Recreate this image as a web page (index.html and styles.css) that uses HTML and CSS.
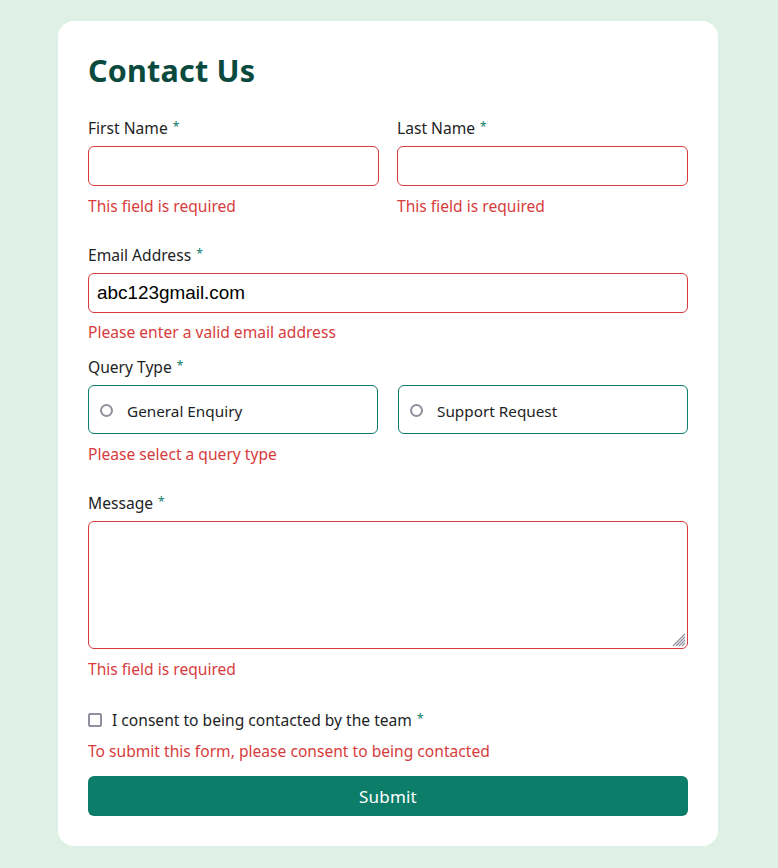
FILE: index.html
```html
<!DOCTYPE html>
<html lang="en">
<head>
<meta charset="utf-8">
<title>Contact Us</title>
<link rel="stylesheet" href="styles.css">
</head>
<body>
<main class="card">
  <h1 class="title">Contact Us</h1>
  <form class="form" novalidate>
    <div class="row names">
      <div class="field">
        <label class="label" for="fn">First Name <span class="req">*</span></label>
        <input class="input invalid" id="fn" type="text">
        <p class="error">This field is required</p>
      </div>
      <div class="field">
        <label class="label" for="ln">Last Name <span class="req">*</span></label>
        <input class="input invalid" id="ln" type="text">
        <p class="error">This field is required</p>
      </div>
    </div>

    <div class="field email">
      <label class="label" for="em">Email Address <span class="req">*</span></label>
      <input class="input invalid email-input" id="em" type="email" value="abc123gmail.com">
      <p class="error">Please enter a valid email address</p>
    </div>

    <div class="field query">
      <span class="label">Query Type <span class="req">*</span></span>
      <div class="radios">
        <label class="radio-box"><input class="radio" type="radio" name="q"><span>General Enquiry</span></label>
        <label class="radio-box"><input class="radio" type="radio" name="q"><span>Support Request</span></label>
      </div>
      <p class="error">Please select a query type</p>
    </div>

    <div class="field message">
      <label class="label" for="msg">Message <span class="req">*</span></label>
      <div class="textarea-wrap">
        <textarea class="input invalid textarea" id="msg"></textarea>
        <svg class="grip" width="14" height="14" viewBox="0 0 14 14" aria-hidden="true">
          <path d="M13 1 L1 13 M13 4 L4 13 M13 7 L7 13 M13 10 L10 13" stroke="#8f8f9d" stroke-width="1.2" fill="none"/>
        </svg>
      </div>
      <p class="error">This field is required</p>
    </div>

    <div class="field consent">
      <label class="check-row"><input class="check" type="checkbox"><span>I consent to being contacted by the team <span class="req">*</span></span></label>
      <p class="error">To submit this form, please consent to being contacted</p>
    </div>

    <button class="submit" type="button">Submit</button>
  </form>
</main>
</body>
</html>
```

FILE: styles.css
```css
* { box-sizing: border-box; }

html, body {
  margin: 0;
  padding: 0;
}

body {
  background: #dff1e7;
  font-family: "Noto Sans", "Lato", sans-serif;
  color: #1d2426;
  min-height: 868px;
  padding-top: 21px;
}

.card {
  width: 660px;
  margin: 0 0 0 58px;
  background: #ffffff;
  border-radius: 16px;
  padding: 30px 30px 30px;
}

.title {
  margin: 0;
  font-size: 30.5px;
  line-height: 38px;
  font-weight: 700;
  color: #0a4a3e;
  letter-spacing: 0.2px;
}

.form {
  display: flex;
  flex-direction: column;
  margin-top: 29px;
}

.row.names {
  display: grid;
  grid-template-columns: 291px 291px;
  column-gap: 18px;
}

.field {
  display: flex;
  flex-direction: column;
}

.label {
  display: block;
  height: 20px;
  font-size: 15.6px;
  line-height: 20px;
  color: #1d2426;
  margin-bottom: 8px;
}

.req {
  color: #0c7d69;
  font-size: 12px;
  line-height: 0;
  vertical-align: 3px;
  margin-left: 1px;
}

.input {
  display: block;
  width: 100%;
  height: 40px;
  border: 1px solid #d73c3c;
  border-radius: 6px;
  background: #fff;
  padding: 0 8px;
  outline: none;
  font-family: "Liberation Sans", Arial, sans-serif;
  font-size: 18.9px;
  color: #000;
}

.textarea-wrap {
  position: relative;
}

.textarea {
  height: 128px;
  resize: none;
  padding: 8px;
}

.grip {
  position: absolute;
  right: 2px;
  bottom: 2px;
  pointer-events: none;
}

.error {
  margin: 10px 0 0;
  height: 20px;
  font-size: 15.6px;
  line-height: 20px;
  color: #d73c3c;
}

.email { margin-top: 29px; }
.email .error { margin-top: 9px; }

.query { margin-top: 15px; }

.radios {
  display: grid;
  grid-template-columns: 290px 290px;
  column-gap: 20px;
}

.radio-box {
  display: flex;
  align-items: center;
  height: 49px;
  border: 1px solid #0c7d69;
  border-radius: 6px;
  padding: 2px 0 0 11px;
  font-size: 15.3px;
  color: #1d2426;
}

.radio {
  appearance: none;
  -webkit-appearance: none;
  width: 13px;
  height: 13px;
  margin: 0 14px 0 0;
  border: 2px solid #8f8f9d;
  border-radius: 50%;
  background: #fff;
}

.message { margin-top: 29px; }

.consent { margin-top: 31px; }
.consent .error { margin-top: 11px; }

.check-row {
  display: flex;
  align-items: center;
  height: 20px;
  font-size: 15.6px;
  line-height: 20px;
  color: #1d2426;
}

.check {
  appearance: none;
  -webkit-appearance: none;
  width: 14px;
  height: 14px;
  margin: 0 10px 0 0;
  border: 2px solid #8f8f9d;
  border-radius: 2px;
  background: #fff;
}

.submit {
  margin-top: 15px;
  height: 40px;
  width: 100%;
  border: none;
  border-radius: 6px;
  background: #0c7d69;
  color: #ffffff;
  font-family: "Noto Sans", "Lato", sans-serif;
  font-size: 17px;
  letter-spacing: 0.2px;
}
```
